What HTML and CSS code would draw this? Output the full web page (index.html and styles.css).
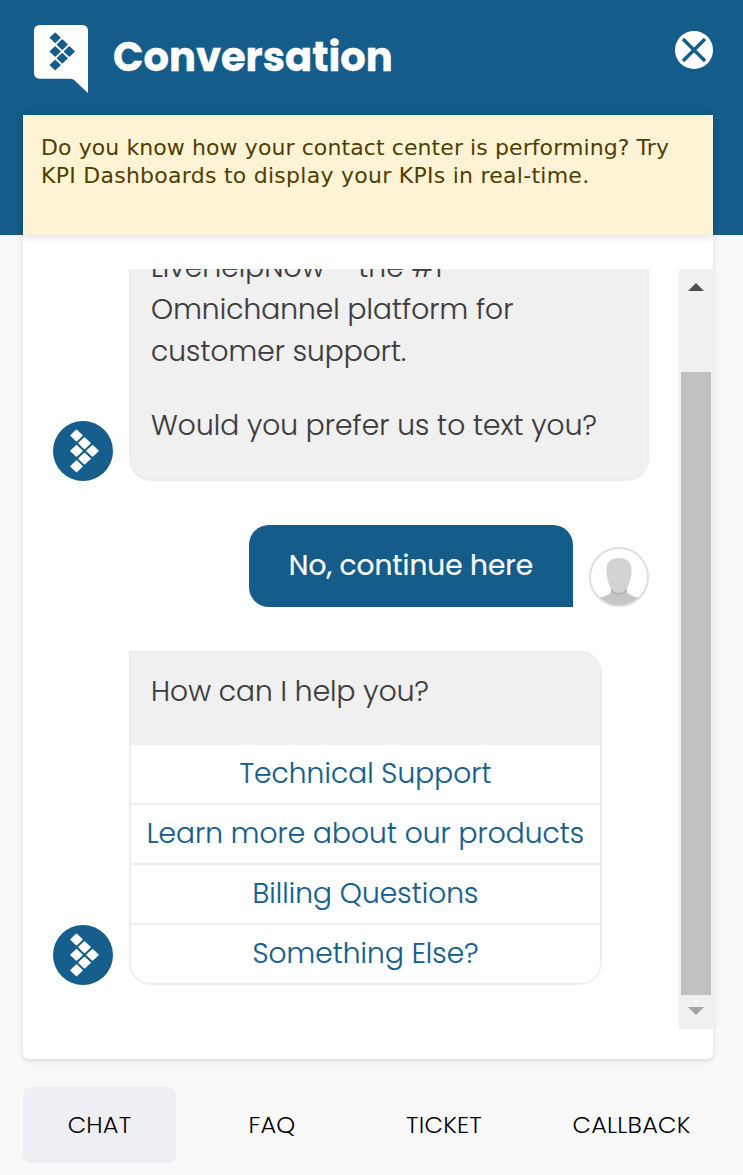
FILE: index.html
```
<!DOCTYPE html>
<html lang="en">
<head>
<meta charset="utf-8">
<title>Conversation</title>
<link rel="stylesheet" href="styles.css">
</head>
<body>
<svg class="defs" aria-hidden="true">
  <symbol id="diamonds" viewBox="0 0 30 44">
    <g stroke-width="1.6" stroke-linejoin="round" fill="currentColor" stroke="currentColor">
      <path id="d" d="M7 1.4l5.4 5.1L7 11.6 1.6 6.5z"/>
      <use href="#d" x="8" y="7.7"/>
      <use href="#d" y="15.4"/>
      <use href="#d" x="16" y="15.4"/>
      <use href="#d" x="8" y="23.1"/>
      <use href="#d" y="30.8"/>
    </g>
  </symbol>
</svg>
<header class="header">
  <svg class="logo" viewBox="0 0 54 69">
    <path fill="#fff" d="M6 0H48Q54 0 54 6V68L40 55Q38 53.700 36 53.700H6Q0 53.700 0 48V6Q0 0 6 0z"/>
    <use class="logo-mark" href="#diamonds" x="15" y="7" width="26.500" height="39"/>
  </svg>
  <h1 class="title">Conversation</h1>
  <svg class="close" viewBox="0 0 38 38">
    <circle cx="19" cy="19" r="19" fill="#fff"/>
    <path d="M8 8L30 30M30 8L8 30" stroke="#155d8a" stroke-width="3.400"/>
  </svg>
</header>
<main class="card">
  <p class="banner"><span class="banner-first">Do you know how your contact center is performing? Try</span><br><span class="banner-second">KPI Dashboards to display your KPIs in real-time.</span></p>
  <div class="chat">
    <div class="messages">
      <div class="row">
        <svg class="avatar" viewBox="0 0 60 60"><circle cx="30" cy="30" r="30" fill="#155d8a"/><use href="#diamonds" x="16.500" y="8" width="30" height="44"/></svg>
        <div class="bubble intro">
          <p>LiveHelpNow – the #1<br>Omnichannel platform for<br>customer support.</p>
          <p>Would you prefer us to text you?</p>
        </div>
      </div>
      <div class="row mine">
        <div class="reply">No, continue here</div>
        <svg class="avatar" viewBox="0 0 60 60">
          <clipPath id="round"><circle cx="30" cy="30" r="29"/></clipPath>
          <g clip-path="url(#round)">
            <path fill="#c6c6c6" d="M8 51Q20 49 22 45V38H38V45Q40 49 52 51V60H8z"/>
            <path fill="#b5b5b5" d="M22 41H38V44Q30 52 22 44z"/>
            <path fill="#d3d3d3" d="M30 11C39 11 43 16 42.500 24C42 36 38 46 30 46S18 36 17.500 24C17 16 21 11 30 11z"/>
          </g>
          <circle cx="30" cy="30" r="29" fill="none" stroke="#dedede" stroke-width="2"/>
        </svg>
      </div>
      <div class="row">
        <svg class="avatar" viewBox="0 0 60 60"><circle cx="30" cy="30" r="30" fill="#155d8a"/><use href="#diamonds" x="16.500" y="8" width="30" height="44"/></svg>
        <div class="bubble menu">
          <p class="question">How can I help you?</p>
          <a class="option">Technical Support</a>
          <a class="option">Learn more about our products</a>
          <a class="option">Billing Questions</a>
          <a class="option">Something Else?</a>
        </div>
      </div>
    </div>
    <div class="scrollbar">
      <svg class="arrow" viewBox="0 0 16 8"><path fill="#505050" d="M0 8L8 0l8 8z"/></svg>
      <div class="thumb"></div>
      <svg class="arrow" viewBox="0 0 16 8"><path fill="#a3a3a3" d="M0 0h16L8 8z"/></svg>
    </div>
  </div>
</main>
<nav class="tabs">
  <a class="tab active">CHAT</a>
  <a class="tab">FAQ</a>
  <a class="tab">TICKET</a>
  <a class="tab">CALLBACK</a>
</nav>
</body>
</html>
```
FILE: styles.css
```
* { box-sizing: border-box; }
body {
  margin: 0;
  height: 1175px;
  overflow: hidden;
  background: linear-gradient(#145d8a 235px, #f9f9f9 235px);
  font-family: Poppins, Inter, sans-serif;
  color: #3c3c3c;
}
p, h1 { margin: 0; }
svg { display: block; flex: none; }
.defs { display: none; }
.header {
  height: 115px;
  padding: 25px 30px 0 34px;
  display: flex;
  align-items: flex-start;
}
.logo { width: 54px; height: 69px; }
.logo-mark { color: #155d8a; }
.title {
  margin: 2px auto 0 25px;
  color: #fff;
  font-size: 40px;
  font-weight: 700;
  line-height: 60px;
  -webkit-text-stroke: .4px #fff;
}
.close { width: 38px; height: 38px; margin-top: 6px; }
.card {
  width: 690px;
  height: 944px;
  margin-left: 23px;
  background: #fff;
  border-radius: 0 0 6px 6px;
  box-shadow: 0 2px 6px rgba(0, 0, 0, .13);
}
.banner {
  height: 120px;
  padding: 19px 18px;
  background: #fff3d5;
  color: #4f3e00;
  font: 22px/28px Verdana, "DejaVu Sans", sans-serif;
  white-space: nowrap;
  box-shadow: 0 2px 8px rgba(0, 0, 0, .12);
}
.banner-first { letter-spacing: .09px; }
.banner-second { letter-spacing: .26px; }
.chat {
  width: 691px;
  height: 794px;
  padding-top: 34px;
  display: flex;
  justify-content: space-between;
}
.messages {
  width: 626px;
  padding: 0 0 44px 30px;
  overflow: hidden;
  display: flex;
  flex-direction: column;
  justify-content: flex-end;
  gap: 44px;
  font-size: 28px;
  font-weight: 300;
  line-height: 42px;
  letter-spacing: .08px;
  -webkit-text-stroke: .2px currentColor;
  white-space: nowrap;
}
.row { display: flex; align-items: flex-end; gap: 16px; }
.mine { justify-content: flex-end; }
.avatar { width: 60px; height: 60px; color: #fff; }
.bubble {
  background: #f0f0f0;
  border: 2px solid #eee;
  border-radius: 0 22px 22px 22px;
}
.intro {
  width: 520px;
  padding: 18px 20px 32px;
  display: flex;
  flex-direction: column;
  gap: 32px;
}
.reply {
  width: 324px;
  height: 82px;
  padding-top: 20px;
  text-align: center;
  color: #fff;
  font-weight: 400;
  letter-spacing: 0;
  background: #145d8a;
  border-radius: 20px 20px 0 20px;
}
.menu { width: 473px; overflow: hidden; }
.question { height: 92px; padding: 18px 20px; }
.option {
  display: block;
  height: 60px;
  padding-top: 8px;
  text-align: center;
  color: #155d8a;
  background: #fff;
  border-bottom: 2px solid #eee;
}
.option:last-child { height: 58px; border: 0; }
.scrollbar {
  width: 35px;
  height: 760px;
  padding: 14px 0;
  background: #f0f0f0;
  display: flex;
  flex-direction: column;
  align-items: flex-start;
}
.arrow { width: 16px; height: 8px; margin-left: 9px; }
.thumb { width: 30px; height: 623px; margin: 81px 0 12px 2px; background: #c1c1c1; }
.tabs {
  margin: 28px 0 0 23px;
  display: grid;
  grid-template-columns: 153px 192px 152px 1fr;
}
.tab {
  height: 76px;
  line-height: 76px;
  text-align: center;
  color: #000;
  font-size: 24px;
  font-weight: 300;
  letter-spacing: .2px;
}
.active { background: #eeeff5; border-radius: 8px; }
```
